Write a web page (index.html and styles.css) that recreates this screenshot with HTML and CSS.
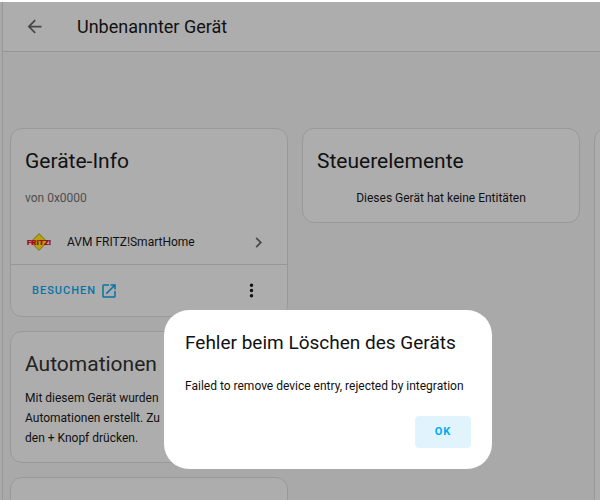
FILE: index.html
```html
<!DOCTYPE html>
<html lang="de">
<head>
<meta charset="utf-8">
<meta name="viewport" content="width=device-width, initial-scale=1">
<title>Unbenannter Gerät</title>
<link rel="stylesheet" href="styles.css">
</head>
<body>
<div class="app">
  <header class="toolbar">
    <button class="icon-button" type="button" aria-label="Zurück">
      <svg class="icon" viewBox="0 0 24 24"><path d="M20 11v2H8l5.500 5.500-1.420 1.420L4.160 12l7.920-7.920L13.500 5.500 8 11h12z"/></svg>
    </button>
    <h1 class="toolbar-title">Unbenannter Gerät</h1>
  </header>
  <main class="columns">
    <div class="column">
      <section class="card">
        <h2 class="card-title">Geräte-Info</h2>
        <p class="card-text muted">von 0x0000</p>
        <a class="integration" href="#integration">
          <svg class="brand" viewBox="0 0 22 18" aria-hidden="true">
            <path d="M11 .6 19.300 9 11 17.400 2.700 9z" fill="#b3a310" stroke="#6b6114" stroke-width=".8"/>
            <text class="brand-text" x="11" y="12" text-anchor="middle">FRITZ!</text>
          </svg>
          <span class="integration-name">AVM FRITZ!SmartHome</span>
          <svg class="icon" viewBox="0 0 24 24" aria-hidden="true"><path d="M8.590 16.580 13.170 12 8.590 7.410 10 6l6 6-6 6-1.410-1.420z"/></svg>
        </a>
        <div class="card-actions">
          <a class="visit" href="#besuchen">BESUCHEN
            <svg class="visit-icon" viewBox="0 0 24 24" aria-hidden="true"><path d="M14 3v2h3.590l-9.830 9.830 1.410 1.410L19 6.410V10h2V3m-2 16H5V5h7V3H5a2 2 0 0 0-2 2v14a2 2 0 0 0 2 2h14a2 2 0 0 0 2-2v-7h-2v7z"/></svg>
          </a>
          <button class="icon-button menu" type="button" aria-label="Menü">
            <svg class="icon" viewBox="0 0 24 24"><path d="M12 16a2 2 0 1 1 0 4 2 2 0 0 1 0-4m0-6a2 2 0 1 1 0 4 2 2 0 0 1 0-4m0-6a2 2 0 1 1 0 4 2 2 0 0 1 0-4z"/></svg>
          </button>
        </div>
      </section>
      <section class="card">
        <h2 class="card-title soft">Automationen</h2>
        <p class="card-text paragraph">Mit diesem Gerät wurden<br>Automationen erstellt. Zu<br>den + Knopf drücken.</p>
      </section>
      <section class="card next"></section>
    </div>
    <div class="column">
      <section class="card">
        <h2 class="card-title">Steuerelemente</h2>
        <p class="card-text centered">Dieses Gerät hat keine Entitäten</p>
      </section>
    </div>
    <div class="column">
      <section class="card tall"></section>
    </div>
  </main>
</div>
<div class="dialog" role="alertdialog" aria-modal="true" aria-labelledby="dialog-title" aria-describedby="dialog-text">
  <h2 class="dialog-title" id="dialog-title">Fehler beim Löschen des Geräts</h2>
  <p class="dialog-text" id="dialog-text">Failed to remove device entry, rejected by integration</p>
  <button class="ok" type="button">OK</button>
</div>
</body>
</html>
```
FILE: styles.css
```css
* {
  box-sizing: border-box;
}

body {
  margin: 0;
  border-top: 2px solid #fff;
  background: #a9a9a9;
  color: #111;
  font-family: Roboto, "Liberation Sans", sans-serif;
  font-size: 12px;
  line-height: 20px;
  height: 100vh;
  overflow: hidden;
}

h1, h2, p {
  margin: 0;
  font-weight: 400;
}

a {
  color: inherit;
  text-decoration: none;
}

button {
  border: 0;
  background: none;
  padding: 0;
  font: inherit;
}

.app {
  display: flex;
  flex-direction: column;
  height: 100%;
  margin-left: 2px;
  border-left: 1px solid #999;
  overflow: hidden;
}

.toolbar {
  display: flex;
  flex: none;
  align-items: center;
  gap: 32px;
  height: 50px;
  padding-left: 21px;
  background: #adadad;
  border-bottom: 1px solid #969696;
}

.toolbar-title {
  font-size: 18px;
  line-height: 24px;
}

.icon-button {
  display: flex;
  color: #484848;
}

.icon {
  width: 21px;
  height: 21px;
  fill: currentColor;
}

.columns {
  display: grid;
  flex: 1;
  min-height: 0;
  grid-template-columns: repeat(3, 278px);
  gap: 14px;
  padding: 76px 7px 0;
  overflow: hidden;
}

.column {
  display: flex;
  flex-direction: column;
  gap: 14px;
}

.card {
  flex: none;
  padding-top: 18px;
  background: #adadad;
  border: 1px solid #999;
  border-radius: 12px;
}

.card-title {
  padding: 0 14px;
  font-size: 21px;
  line-height: 28px;
}

.soft {
  color: #222;
}

.card-text {
  padding: 13px 14px 12px;
}

.muted {
  color: #4d4d4d;
}

.centered {
  padding-bottom: 14px;
  text-align: center;
}

.paragraph {
  padding-top: 10px;
  padding-bottom: 14px;
}

.integration {
  display: flex;
  align-items: center;
  height: 44px;
  padding: 0 18px 0 17px;
}

.integration-name {
  flex: 1;
  margin-left: 17px;
}

.integration .icon {
  color: #484848;
}

.brand {
  width: 22px;
  height: 18px;
  overflow: visible;
}

.brand-text {
  fill: #b00d12;
  stroke: #5c1010;
  stroke-width: .2px;
  font-size: 8px;
  font-weight: 900;
}

.card-actions {
  display: flex;
  align-items: center;
  justify-content: space-between;
  height: 52px;
  padding: 0 25px 0 21px;
  border-top: 1px solid #969696;
}

.visit {
  display: flex;
  align-items: center;
  gap: 4px;
  color: #0773a6;
  font-size: 11px;
  font-weight: 500;
  letter-spacing: 1px;
}

.visit-icon {
  width: 18px;
  height: 18px;
  fill: currentColor;
}

.menu {
  color: #111;
}

.next {
  height: 80px;
}

.tall {
  height: 460px;
}

.dialog {
  position: fixed;
  top: 310px;
  left: 164px;
  display: flex;
  flex-direction: column;
  min-width: 328px;
  padding: 19px 21px 21px;
  background: #fff;
  border-radius: 25px;
}

.dialog-title {
  font-size: 19px;
  line-height: 28px;
}

.dialog-text {
  margin: 19px 0 20px;
}

.ok {
  align-self: flex-end;
  width: 56px;
  height: 32px;
  border-radius: 4px;
  background: #e1f4fe;
  color: #03a9f4;
  font-size: 11px;
  font-weight: 700;
  letter-spacing: 1px;
}
```
